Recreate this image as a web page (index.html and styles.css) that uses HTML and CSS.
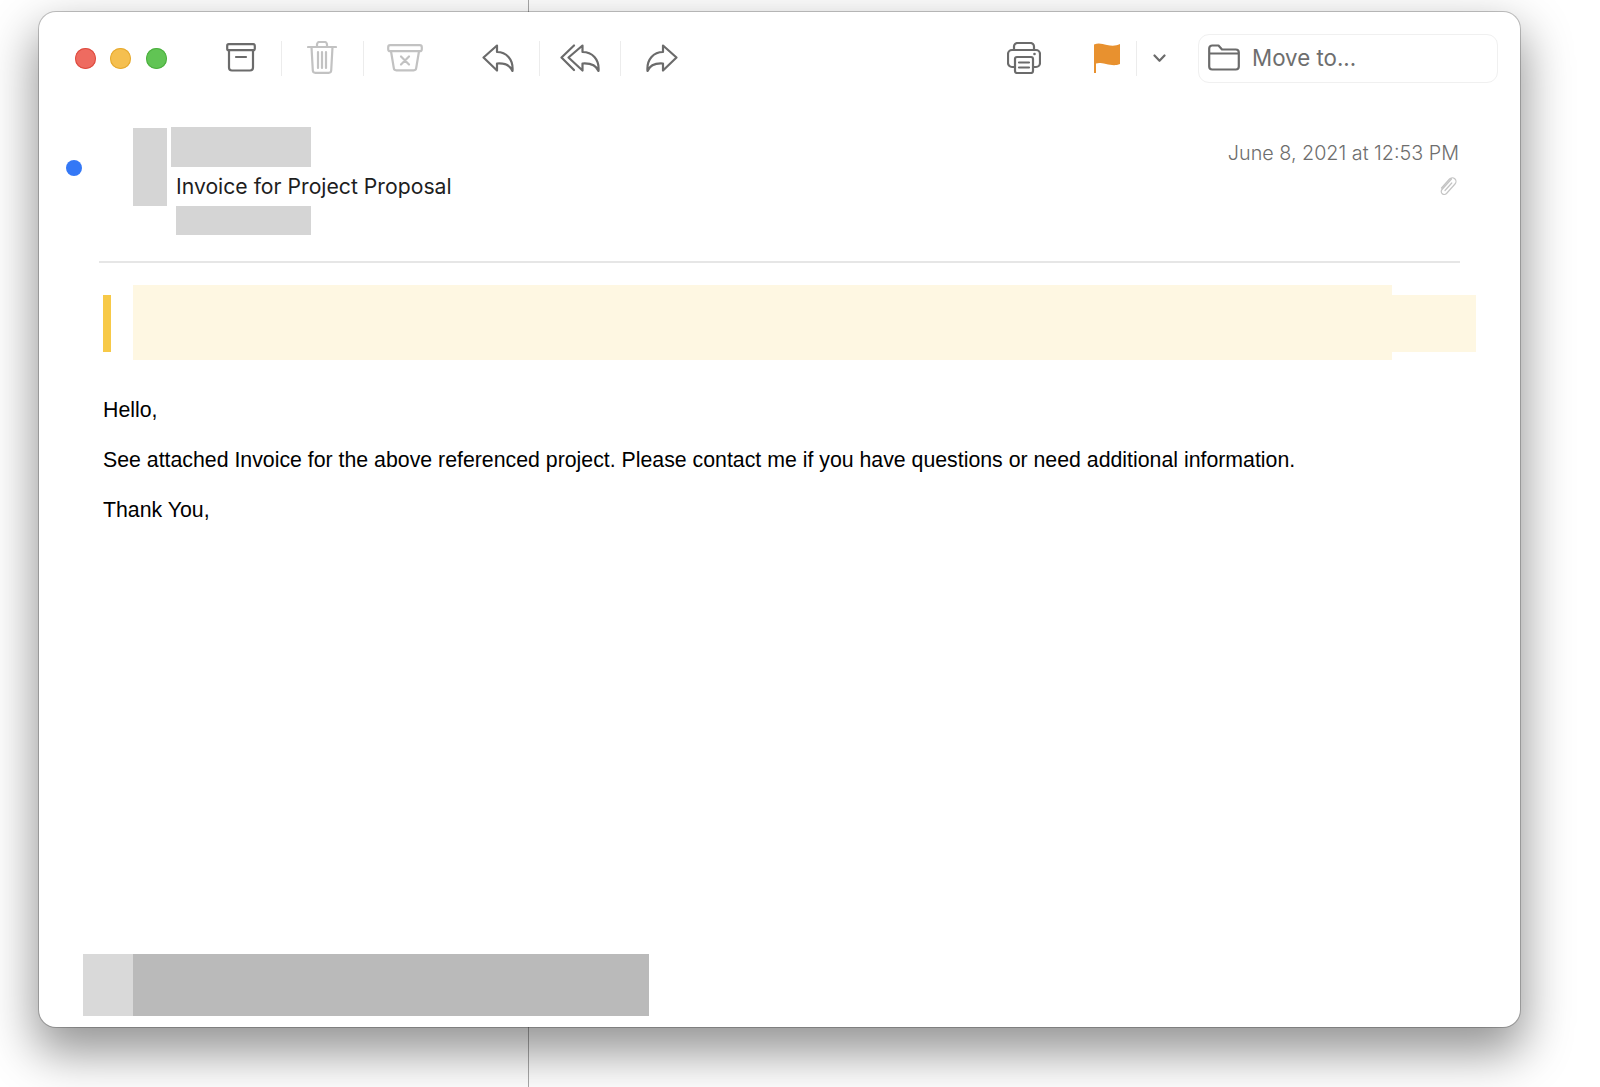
FILE: index.html
```html
<!DOCTYPE html>
<html lang="en">
<head>
<meta charset="utf-8">
<title>Invoice for Project Proposal</title>
<link rel="stylesheet" href="styles.css">
</head>
<body>
<main class="window">
  <header class="toolbar">
    <div class="lights">
      <span class="light light-red"></span>
      <span class="light light-yellow"></span>
      <span class="light light-green"></span>
    </div>
    <svg class="icon i-archive" width="30" height="29" viewBox="0 0 30 29"><rect x="1.2" y="1.2" width="27.6" height="6" rx="1.5"/><path d="M3 7.2V24.5a3 3 0 0 0 3 3H24a3 3 0 0 0 3-3V7.2M10 14h10"/></svg>
    <span class="sep s-1"></span>
    <svg class="icon muted i-trash" width="30" height="33" viewBox="0 0 30 33"><path d="M1 6h28M10 6V3.5A2.5 2.5 0 0 1 12.500 1h5A2.500 2.500 0 0 1 20 3.500V6M4.500 6l1.300 23.500a2.500 2.500 0 0 0 2.500 2.300h13.400a2.500 2.500 0 0 0 2.500-2.300L25.500 6M11 11v16M15 11v16M19 11v16"/></svg>
    <span class="sep s-2"></span>
    <svg class="icon muted i-delete" width="36" height="28" viewBox="0 0 36 28"><rect x="1.200" y="1.200" width="33.600" height="6" rx="2"/><path d="M4 7.200l2.800 16.800a2.500 2.500 0 0 0 2.500 2.300h17.400a2.500 2.500 0 0 0 2.500-2.300L32 7.200M14 12.500l8 8M22 12.500l-8 8"/></svg>
    <svg class="icon i-reply" width="32" height="28" viewBox="0 0 32 28"><path d="M15 1.500L1.500 13.500 15 26.500V19.500C22 19 28 21 30.500 27 31.500 15 24 8 15 8Z"/></svg>
    <span class="sep s-3"></span>
    <svg class="icon i-replyall" width="40" height="28" viewBox="0 0 40 28"><path d="M14 1.500L1.500 13.500 14 26M22.500 1.500L8.500 13.500 22.500 26.500V19.500C30 19 36 21 38.500 27 39.500 15 32 8 22.500 8Z"/></svg>
    <span class="sep s-4"></span>
    <svg class="icon flip i-forward" width="32" height="28" viewBox="0 0 32 28"><path d="M15 1.500L1.500 13.500 15 26.500V19.500C22 19 28 21 30.500 27 31.500 15 24 8 15 8Z"/></svg>
    <svg class="icon i-print" width="34" height="32" viewBox="0 0 34 32"><path d="M7 8V4.500A3.500 3.500 0 0 1 10.500 1H23.500A3.500 3.500 0 0 1 27 4.500V8M8 25H5a4 4 0 0 1-4-4V12a4 4 0 0 1 4-4H29a4 4 0 0 1 4 4V21a4 4 0 0 1-4 4H26"/><rect x="8" y="15" width="18" height="16" rx="2"/><path d="M12 20.500H22M12 25.500H22"/><circle class="dot-fill" cx="27.500" cy="12" r="1.300"/></svg>
    <svg class="i-flag" width="26" height="30" viewBox="0 0 26 30"><path class="flag-shape" d="M0 1.500C5-.5 8 1 13 2S22 3 26 1V21C21 23 17 22 12 21S5 19.500 2 20.500V30H0Z"/></svg>
    <span class="sep s-5"></span>
    <svg class="icon i-chevron" width="13" height="9" viewBox="0 0 13 9"><path d="M1.500 1.500L6.500 6.800 11.500 1.500"/></svg>
    <div class="move-to">
      <svg class="icon" width="32" height="27" viewBox="0 0 32 27"><path d="M1.200 22.500V4.500A3 3 0 0 1 4.200 1.500H10.500L14 5.500H27.800A3 3 0 0 1 30.800 8.500V22.500A3 3 0 0 1 27.800 25.500H4.200A3 3 0 0 1 1.200 22.500ZM1.200 9.500H30.800"/></svg>
      <span>Move to...</span>
    </div>
  </header>

  <section class="msg-head">
    <span class="unread"></span>
    <div class="redact avatar"></div>
    <div class="sender-col">
      <div class="redact from"></div>
      <div class="subject">Invoice for Project Proposal</div>
      <div class="redact to"></div>
    </div>
    <div class="meta">
      <div class="date">June 8, 2021 at 12:53 PM</div>
      <svg class="clip" width="18" height="20" viewBox="0 0 18 20"><path d="M12.500 3L3 13.500a3 3 0 0 0 4.500 4L16 8a3.600 3.600 0 0 0-5.500-5L2.500 12M12.800 7L6 14.500"/></svg>
    </div>
  </section>

  <hr class="rule">

  <div class="banner">
    <span class="banner-mark"></span>
    <span class="banner-main"></span>
    <span class="banner-end"></span>
  </div>

  <article class="body-text">
    <p>Hello,</p>
    <p>See attached Invoice for the above referenced project. Please contact me if you have questions or need additional information.</p>
    <p>Thank You,</p>
  </article>

  <div class="attachment">
    <span class="att-icon"></span>
    <span class="att-name"></span>
  </div>
</main>
</body>
</html>
```
FILE: styles.css
```css
* { box-sizing: border-box; }
html, body { margin: 0; height: 100%; }
body {
  overflow: hidden;
  background: #fff linear-gradient(#a9a9a9, #a9a9a9) 528px 0 / 1px 100% no-repeat;
  font-family: "Inter", "Liberation Sans", sans-serif;
}
.window {
  display: flex;
  flex-direction: column;
  width: 1481px;
  height: 1015px;
  margin: 12px 0 0 39px;
  background: #fff;
  border-radius: 17px;
  box-shadow: 0 0 0 1px rgba(0, 0, 0, .22), 0 22px 48px 4px rgba(0, 0, 0, .42);
}
.toolbar {
  display: flex;
  align-items: center;
  height: 49px;
  margin: 22px 22px 0 35.500px;
  flex: none;
}
.lights { display: flex; gap: 14.500px; }
.light { width: 21px; height: 21px; border-radius: 50%; }
.light-red { background: #ee6b60; box-shadow: inset 0 0 0 1px #dd4b3f; }
.light-yellow { background: #f5bf4f; box-shadow: inset 0 0 0 1px #e5a92f; }
.light-green { background: #61c454; box-shadow: inset 0 0 0 1px #4caf3f; }
.icon {
  flex: none;
  margin-bottom: 2px;
  fill: none;
  stroke: #6b6b6b;
  stroke-width: 2.2;
  stroke-linejoin: round;
  stroke-linecap: round;
}
.muted { stroke: #c2c2c2; }
.flip { transform: scaleX(-1); }
.dot-fill { fill: #6b6b6b; stroke: none; }
.sep { flex: none; width: 1px; height: 35px; margin-bottom: 1px; background: #ececec; }
.i-archive { margin-left: 59.500px; }
.s-1 { margin-left: 25px; }
.i-trash { margin-left: 25px; }
.s-2 { margin-left: 26px; }
.i-delete { margin-left: 23px; }
.i-reply { margin-left: 59px; }
.s-3 { margin-left: 25px; }
.i-replyall { margin-left: 20px; }
.s-4 { margin-left: 20px; }
.i-forward { margin-left: 25px; }
.i-print { margin-left: 329px; }
.i-flag { flex: none; margin-left: 53px; margin-bottom: 1px; }
.flag-shape { fill: #e8912f; }
.s-5 { margin-left: 16px; }
.i-chevron { margin-left: 16px; margin-top: 2px; }
.move-to {
  display: flex;
  align-items: center;
  gap: 12px;
  width: 300px;
  height: 49px;
  margin-left: auto;
  padding: 0 0 2px 9px;
  border: 1px solid #f0f0f0;
  border-radius: 11px;
  font-size: 22.3px;
  color: #6e6e6e;
}
.move-to .icon { margin-bottom: 1px; }
.msg-head {
  display: flex;
  flex: none;
  height: 108px;
  margin: 44px 61px 0 27px;
}
.unread {
  flex: none;
  width: 16px;
  height: 16px;
  margin-top: 33px;
  border-radius: 50%;
  background: #3478f6;
}
.redact { background: #d5d5d5; }
.avatar { flex: none; width: 34px; height: 78px; margin: 1px 0 0 51px; }
.sender-col { flex: none; margin-left: 4px; }
.from { width: 140px; height: 40px; }
.subject {
  height: 39px;
  padding-left: 5px;
  font-size: 21.2px;
  line-height: 39px;
  color: #1e1e1e;
  white-space: nowrap;
}
.to { width: 135px; height: 29px; margin-left: 5px; }
.meta { display: flex; flex-direction: column; align-items: flex-end; margin-left: auto; }
.date {
  margin-top: 14px;
  font-size: 19.75px;
  line-height: 24px;
  font-weight: 300;
  color: #6e6e6e;
  white-space: nowrap;
}
.clip { margin-top: 11px; margin-right: 2px; fill: none; stroke: #c4c4c4; stroke-width: 1.2; stroke-linecap: round; }
.rule {
  flex: none;
  width: 1361px;
  height: 2px;
  margin: 26px 0 0 60px;
  border: 0;
  background: #e6e6e6;
}
.banner { display: flex; flex: none; height: 75px; margin: 22px 0 0 64px; }
.banner-mark { width: 8px; height: 57px; margin-top: 10px; background: #f7c948; }
.banner-main { width: 1259px; margin-left: 22px; background: #fef7e2; }
.banner-end { width: 84px; height: 57px; margin-top: 10px; background: #fef7e2; }
.body-text {
  flex: none;
  margin: 37px 0 0 64px;
  font-family: "Liberation Sans", Arial, sans-serif;
  font-size: 21.3px;
  line-height: 26px;
  color: #000;
}
.body-text p { margin: 0 0 24px; }
.attachment { display: flex; height: 62px; margin: auto 0 11px 44px; flex: none; }
.att-icon { width: 50px; background: #d9d9d9; }
.att-name { width: 516px; background: #bababa; }
```
